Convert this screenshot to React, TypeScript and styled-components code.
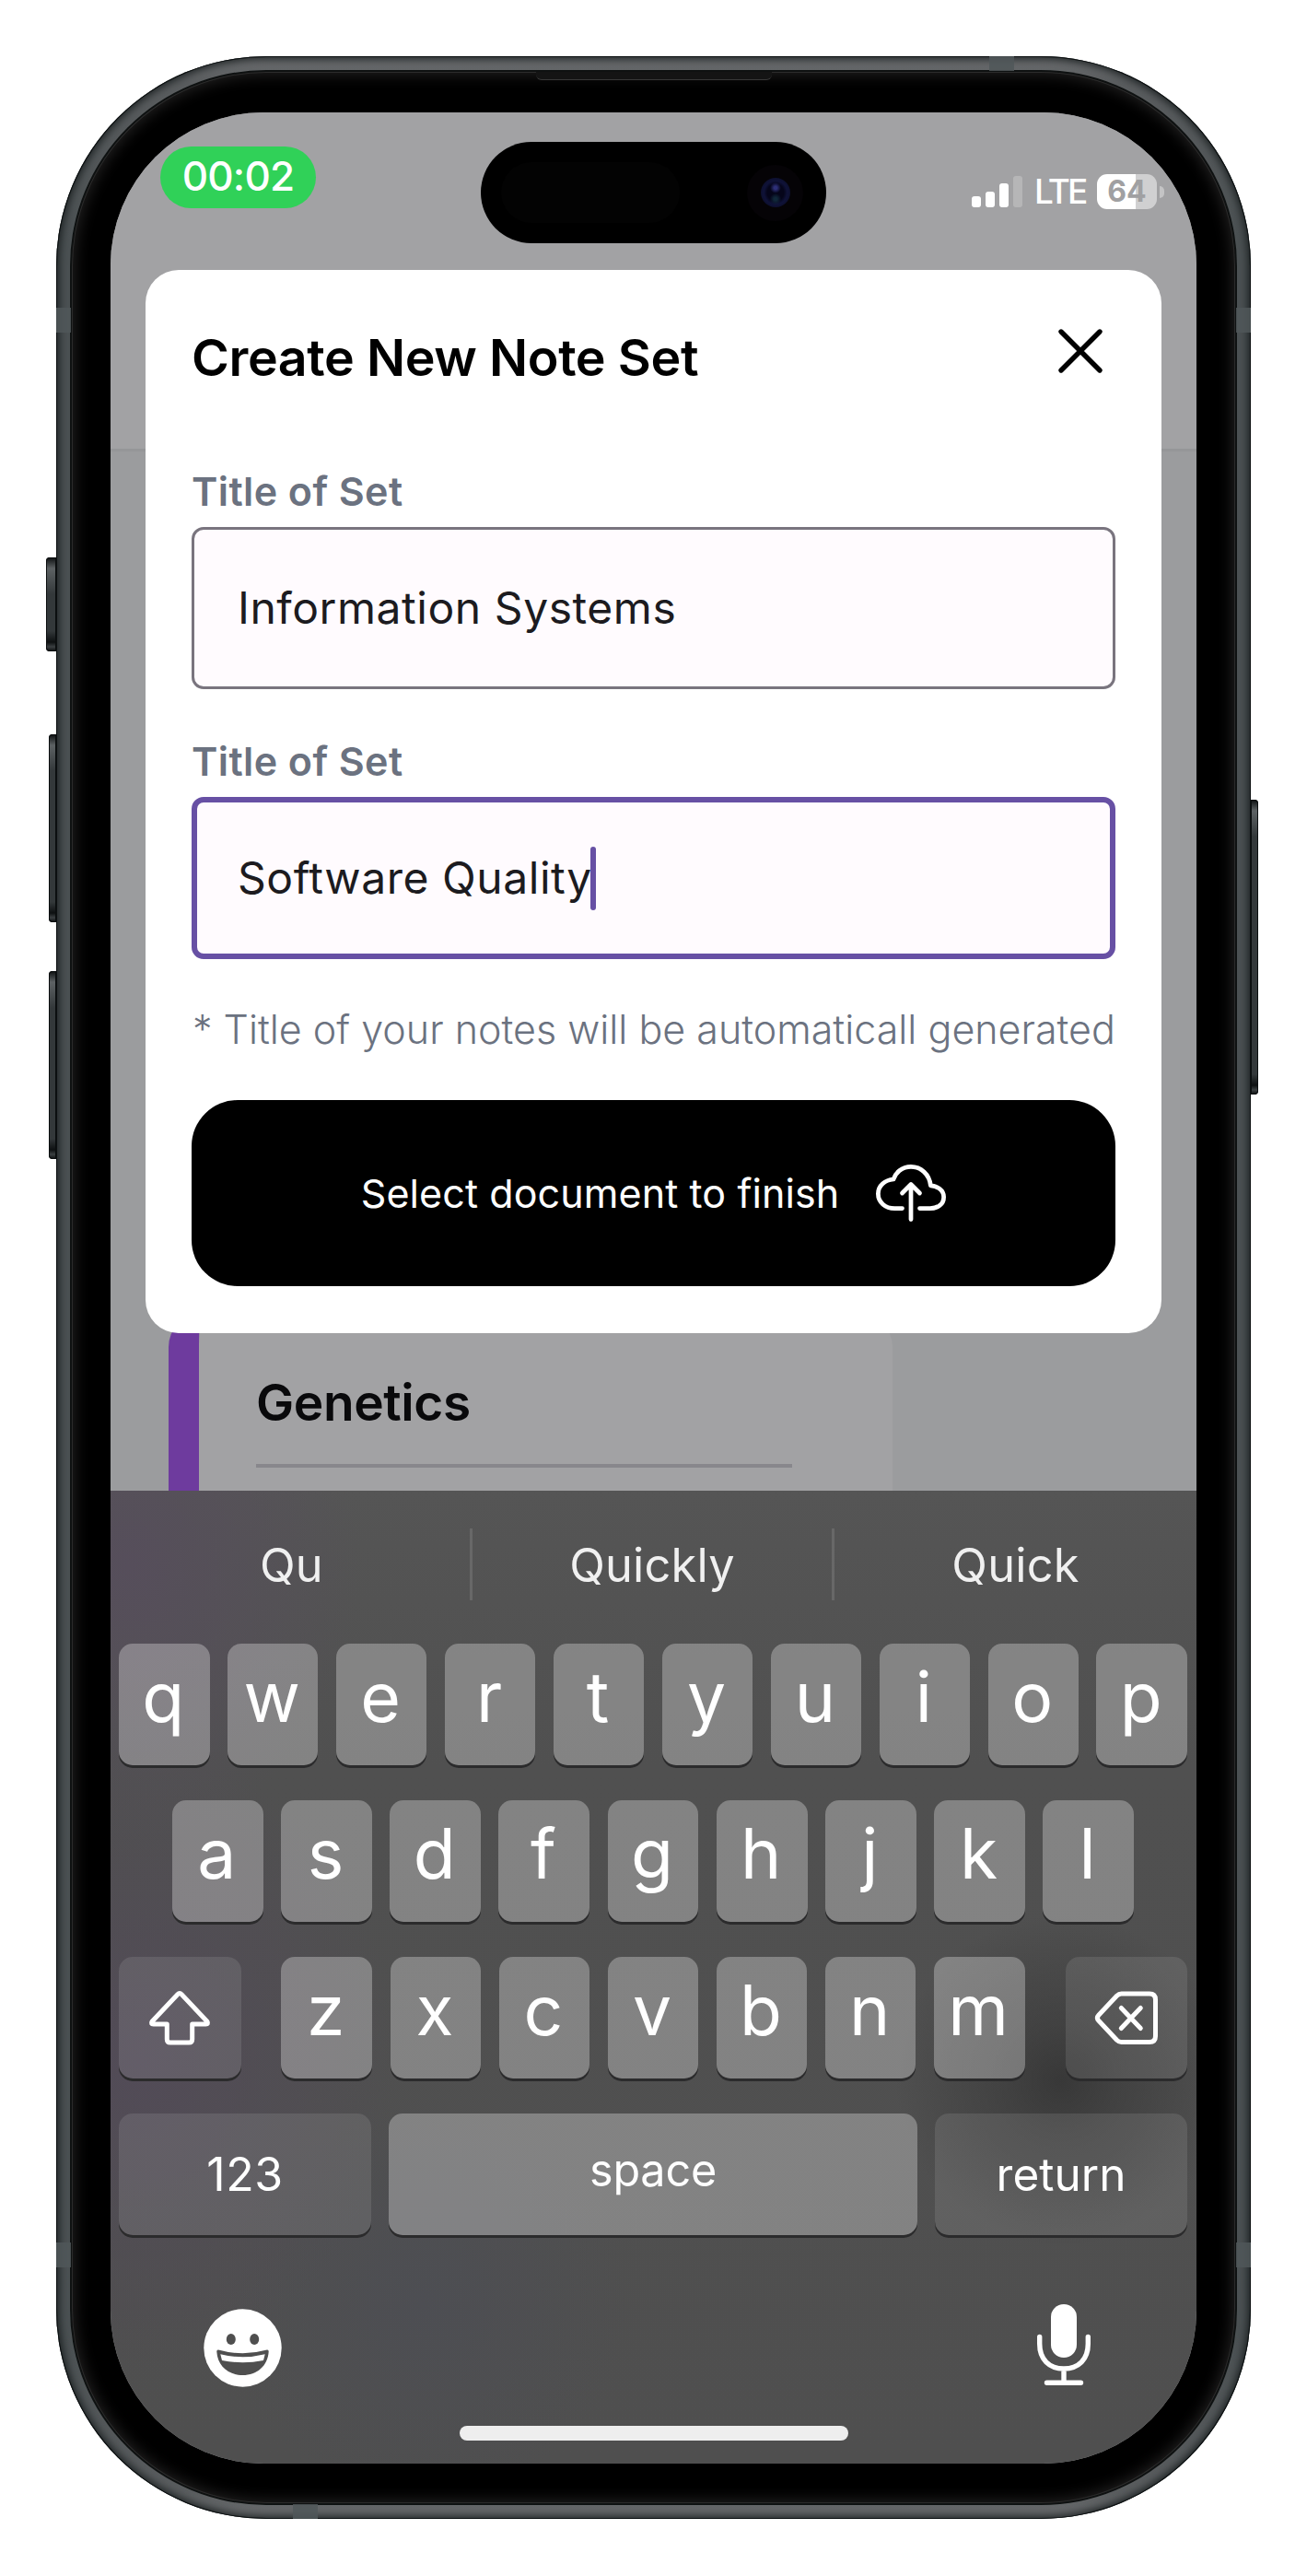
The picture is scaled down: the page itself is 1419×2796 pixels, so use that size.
import React from "react";
import styled, { createGlobalStyle, css } from "styled-components";

const GlobalStyle = createGlobalStyle`
  * { box-sizing: border-box; }
  html, body { margin: 0; padding: 0; background: #fff; }
  body { font-family: Inter, "Liberation Sans", sans-serif; }
  button { font-family: inherit; border: 0; padding: 0; margin: 0; background: none; }
  svg { display: block; flex: none; }
`;

/* ---------- Device frame ---------- */

const Page = styled.main`
  width: 1419px;
  height: 2796px;
  padding: 61px;
  overflow: hidden;
  background: #fff;
`;

const Device = styled.div`
  position: relative;
  width: 1297px;
  height: 2673px;
  padding: 17px;
  border-radius: 228px;
  background: linear-gradient(180deg, #6c6e70 0, #5a5d5f 30px, #4b5153 200px, #4b5153 2473px, #5a5d5f 2643px, #6c6e70 100%);
  box-shadow: inset 0 0 0 1px #0c1011, inset 0 0 10px 3px #1a1f20;
`;

const Bezel = styled.div`
  width: 100%;
  height: 100%;
  padding: 44px 42px 43px 42px;
  border-radius: 211px;
  background: #000;
  box-shadow: 0 0 0 2px #0e1111, inset 0 0 0 1px #2b2b2b, inset 0 0 16px 3px #232222;
`;

const SideButton = styled.div<{ $side: "left" | "right"; $top: number; $height: number; $depth: number }>`
  position: absolute;
  top: ${(p) => p.$top}px;
  ${(p) => p.$side}: ${(p) => -p.$depth}px;
  width: ${(p) => p.$depth}px;
  height: ${(p) => p.$height}px;
  border-radius: ${(p) => (p.$side === "left" ? "4px 0 0 4px" : "0 4px 4px 0")};
  background: linear-gradient(180deg, #0b0e0f 0, #5d6264 12px, #33383a 40px, #33383a calc(100% - 22px), #0d1011 calc(100% - 10px), #3b4042 calc(100% - 5px), #090b0c 100%);
  box-shadow: inset 0 0 0 1px #0a0d0e;
`;

const Antenna = styled.div<{ $edge: "top" | "bottom" | "left" | "right"; $offset: number }>`
  position: absolute;
  background: rgba(80, 87, 89, 0.85);
  ${(p) =>
    p.$edge === "top" || p.$edge === "bottom"
      ? css`
          ${p.$edge}: 0;
          left: ${p.$offset}px;
          width: 27px;
          height: 16px;
        `
      : css`
          ${p.$edge}: 0;
          top: ${p.$offset}px;
          width: 16px;
          height: 27px;
        `}
`;

const Earpiece = styled.div`
  position: absolute;
  top: 17px;
  left: 521px;
  width: 256px;
  height: 9px;
  background: #141414;
  border-bottom: 1px solid #383838;
  border-radius: 0 0 6px 6px;
`;

const Screen = styled.div`
  display: grid;
  width: 1179px;
  height: 2552px;
  border-radius: 166px;
  overflow: hidden;
  background: #9b9c9e;

  > * {
    grid-area: 1 / 1;
    min-width: 0;
    min-height: 0;
  }
`;

/* ---------- Dimmed app behind the dialog ---------- */

const Backdrop = styled.div`
  display: flex;
  flex-direction: column;
`;

const BackdropHeader = styled.div`
  height: 368px;
  background: #a2a2a4;
  border-bottom: 3px solid #959698;
`;

const NoteCard = styled.article`
  width: 786px;
  height: 360px;
  margin: 936px 0 0 63px;
  padding: 63px 109px 0 62px;
  border-left: 33px solid #6e3b9e;
  border-radius: 36px;
  background: #a2a2a4;
`;

const CardTitle = styled.h3`
  margin: 0;
  height: 104px;
  border-bottom: 4px solid #88878c;
  font-size: 55px;
  line-height: 66px;
  font-weight: 600;
  letter-spacing: -0.4px;
  color: #09090b;
  white-space: nowrap;
`;

/* ---------- Foreground ---------- */

const Foreground = styled.div`
  display: flex;
  flex-direction: column;
`;

const StatusBar = styled.header`
  display: grid;
  grid-template-columns: 348px 375px 1fr;
  align-items: start;
  height: 171px;
  padding: 32px 35px 0 54px;
`;

const CallPill = styled.span`
  width: 169px;
  height: 67px;
  margin-top: 5px;
  border-radius: 34px;
  background: #30d158;
  color: #fff;
  font-size: 44px;
  line-height: 65px;
  font-weight: 500;
  letter-spacing: -0.8px;
  text-align: center;
`;

const Island = styled.div`
  display: flex;
  align-items: center;
  justify-content: space-between;
  height: 110px;
  padding: 0 25px 0 22px;
  border-radius: 55px;
  background: #000;
`;

const IslandSensor = styled.span`
  width: 194px;
  height: 66px;
  border-radius: 33px;
  background: #030303;
`;

const Lens = styled.span`
  display: grid;
  place-items: center;
  width: 61px;
  height: 61px;
  border-radius: 50%;
  background: #050306;

  &::after {
    content: "";
    width: 32px;
    height: 32px;
    border-radius: 50%;
    background: radial-gradient(circle at 50% 34%, #2d2f78 0 6%, transparent 22%),
      radial-gradient(circle at 50% 72%, #10283a 0 6%, transparent 22%),
      radial-gradient(circle, #05051a 0 40%, #0f1238 56%, #0a0b1c 100%);
  }
`;

const StatusIcons = styled.div`
  display: flex;
  align-items: center;
  justify-content: flex-end;
  height: 108px;
`;

const Signal = styled.span`
  display: flex;
  align-items: flex-end;
  gap: 5px;
  height: 34px;
  margin-right: 13px;
`;

const SignalBar = styled.i<{ $h: number; $off?: boolean }>`
  width: 10px;
  height: ${(p) => p.$h}px;
  border-radius: 3px;
  background: ${(p) => (p.$off ? "#b6b6b7" : "#fff")};
`;

const Network = styled.span`
  width: 55px;
  margin-right: 13px;
  color: #fff;
  font-size: 37px;
  line-height: 40px;
  font-weight: 500;
  letter-spacing: -2.8px;
  white-space: nowrap;
`;

const Battery = styled.span`
  width: 65px;
  height: 38px;
  border-radius: 11px;
  background: linear-gradient(90deg, #fff 64%, #d0d0d1 64%);
  color: #a0a0a2;
  font-size: 32px;
  line-height: 38px;
  font-weight: 700;
  text-align: center;
`;

const BatteryTip = styled.span`
  width: 5px;
  height: 13px;
  margin-left: 3px;
  border-radius: 0 5px 5px 0;
  background: #c4c4c5;
`;

/* ---------- Dialog ---------- */

const Dialog = styled.section`
  display: flex;
  flex-direction: column;
  height: 1154px;
  margin: 0 38px;
  padding: 50px 50px 51px;
  border-radius: 36px;
  background: #fff;
`;

const DialogHeader = styled.div`
  display: flex;
  align-items: flex-start;
  justify-content: space-between;
  height: 90px;
  margin-bottom: 75px;
  padding: 0 11px 0 0;
`;

const DialogTitle = styled.h2`
  margin: 0;
  font-size: 55.5px;
  line-height: 90px;
  font-weight: 600;
  letter-spacing: -0.4px;
  color: #000;
  white-space: nowrap;
`;

const CloseButton = styled.button`
  margin-top: 11px;
`;

const Field = styled.label`
  display: block;
  margin-bottom: 53px;

  & + & {
    margin-bottom: 46px;
  }
`;

const FieldLabel = styled.span`
  display: block;
  margin: 0 0 14px 0;
  font-size: 43px;
  line-height: 50px;
  font-weight: 600;
  letter-spacing: 0.4px;
  color: #6b7280;
`;

const FieldBox = styled.span<{ $focused?: boolean }>`
  display: flex;
  align-items: center;
  height: 176px;
  padding-left: ${(p) => (p.$focused ? 44 : 47)}px;
  border: ${(p) => (p.$focused ? "6px solid #6750a4" : "3px solid #79747e")};
  border-radius: 13px;
  background: #fffbfe;
  font-size: 48px;
  line-height: 60px;
  letter-spacing: 0.55px;
  color: #1c1b1f;
  white-space: nowrap;
`;

const Caret = styled.i`
  width: 6px;
  height: 69px;
  margin-left: -2px;
  border-radius: 3px;
  background: #6750a4;
`;

const Hint = styled.p`
  margin: 0 0 47px 1px;
  font-size: 43px;
  line-height: 60px;
  font-weight: 300;
  color: #6b7280;
  white-space: nowrap;
`;

const SubmitButton = styled.button`
  display: flex;
  align-items: center;
  justify-content: center;
  gap: 40px;
  height: 202px;
  border-radius: 50px;
  background: #000;
  color: #fff;
  font-size: 43px;
  line-height: 50px;
  letter-spacing: 0.1px;
  white-space: nowrap;
`;

/* ---------- Keyboard ---------- */

const Keyboard = styled.section`
  display: flex;
  flex-direction: column;
  height: 1056px;
  margin-top: auto;
  background: radial-gradient(circle at 1032px 640px, rgba(48, 48, 48, 0.75) 0, rgba(48, 48, 48, 0.45) 60px, rgba(60, 60, 60, 0) 180px),
    radial-gradient(ellipse 250px 300px at 20px 80px, #564e5b 0, rgba(84, 78, 90, 0) 100%),
    radial-gradient(ellipse 280px 340px at 30px 620px, #524b57 0, rgba(80, 75, 88, 0) 100%),
    radial-gradient(ellipse 220px 220px at 340px 880px, #4d4e53 0, rgba(78, 79, 84, 0) 100%),
    linear-gradient(180deg, #555555 0, #505050 300px, #4f4f4f 100%);
`;

const Suggestions = styled.div`
  display: grid;
  grid-template-columns: 390px 393px 1fr;
  align-items: center;
  height: 160px;
  margin-bottom: 6px;
`;

const Suggestion = styled.span`
  height: 78px;
  border-left: 3px solid #686868;
  color: #f0f0f0;
  font-size: 50.5px;
  line-height: 79px;
  letter-spacing: 0.2px;
  text-align: center;

  &:first-child {
    border-color: transparent;
  }
`;

const Rows = styled.div`
  display: flex;
  flex-direction: column;
  gap: 38px;
`;

const KeyRow = styled.div<{ $inset?: number }>`
  display: flex;
  gap: 19.4px;
  height: 132px;
  padding: 0 ${(p) => (p.$inset ?? 9) + 1}px 0 ${(p) => p.$inset ?? 9}px;
`;

const Key = styled.button<{ $dark?: boolean; $width?: number; $pushLeft?: boolean; $pushRight?: boolean }>`
  display: flex;
  align-items: center;
  justify-content: center;
  flex: ${(p) => (p.$width ? `0 0 ${p.$width}px` : "1 1 0")};
  min-width: 0;
  margin-left: ${(p) => (p.$pushLeft ? 24.6 : 0)}px;
  margin-right: ${(p) => (p.$pushRight ? 24.6 : 0)}px;
  border-radius: 15px;
  background: ${(p) => (p.$dark ? "rgba(255, 255, 255, 0.1)" : "rgba(255, 255, 255, 0.295)")};
  box-shadow: 0 3px 0 #2b2b2c;
  color: #fff;
`;

const Letter = styled.span`
  margin-left: -2px;
  padding-bottom: 16px;
  font-size: 75px;
  line-height: 90px;
  font-weight: 400;
`;

const KeyLabel = styled.span<{ $lift?: number; $size?: number; $track?: number }>`
  padding-bottom: ${(p) => p.$lift ?? 0}px;
  font-size: ${(p) => p.$size ?? 49}px;
  line-height: 60px;
  letter-spacing: ${(p) => p.$track ?? 0}px;
`;

const Tools = styled.div`
  display: flex;
  align-items: flex-start;
  justify-content: space-between;
  height: 207px;
  padding: 75px 114px 0 101px;
`;

const EmojiButton = styled.button`
  margin-top: 5px;
`;

const HomeIndicator = styled.div`
  width: 422px;
  height: 16px;
  margin: 0 auto;
  border-radius: 8px;
  background: #eee;
`;

/* ---------- Icons ---------- */

const CloseIcon = () => (
  <svg width="54" height="54" viewBox="0 0 54 54" fill="none" stroke="#000" strokeWidth="5.4" strokeLinecap="round">
    <path d="M6 6 48 48M48 6 6 48" />
  </svg>
);

const CloudUploadIcon = () => (
  <svg width="76" height="76" viewBox="0 0 512 512" fill="none" stroke="#fff" strokeWidth="32" strokeLinecap="round" strokeLinejoin="round">
    <path d="M320 367.79h76c55 0 100-29.21 100-83.6s-53-81.47-96-83.6c-8.89-85.06-71-136.8-144-136.8-69 0-113.44 45.79-128 91.2-60 5.7-112 43.88-112 106.4s54 106.4 120 106.4h56" />
    <path d="M320 255.79l-64-64-64 64M256 448.21V207.79" />
  </svg>
);

const ShiftIcon = () => (
  <svg width="68" height="60" viewBox="0 0 68 60" fill="none" stroke="#fff" strokeWidth="5" strokeLinejoin="round">
    <path d="M31.8 4.7Q34 2.4 36.2 4.7L64 34.2Q65.6 37 62.5 37H47.7V53.5Q47.7 57 44.2 57H23.8Q20.3 57 20.3 53.5V37H5.5Q2.4 37 4 34.2Z" />
  </svg>
);

const BackspaceIcon = () => (
  <svg width="70" height="60" viewBox="0 0 70 60" fill="none" stroke="#fff" strokeWidth="5" strokeLinecap="round" strokeLinejoin="round">
    <path d="M29.5 4H60Q66.5 4 66.5 10.5V50Q66.5 56.5 60 56.5H29.5Q26.8 56.5 24.5 54.2L4.8 33.2Q2 30.2 4.8 27.2L24.5 6.3Q26.8 4 29.5 4Z" />
    <path d="M29.3 19.5 50.3 41.5M50.3 19.5 29.3 41.5" />
  </svg>
);

const EmojiIcon = () => (
  <svg width="85" height="85" viewBox="0 0 85 85">
    <circle cx="42.5" cy="42.5" r="42.2" fill="#fff" />
    <ellipse cx="29.8" cy="33" rx="5" ry="6" fill="#4f4f4f" />
    <ellipse cx="55.2" cy="33" rx="5" ry="6" fill="#4f4f4f" />
    <path d="M16 44.6Q42.5 52 69 44.6Q70.8 44.4 70.7 46.5C69.7 62 58 72 42.5 72S15.3 62 14.3 46.5Q14.2 44.4 16 44.6Z" fill="#4f4f4f" />
    <path d="M18.3 49.2Q42.5 55.2 66.7 49.2L65 56Q42.5 60.5 20 56Z" fill="#fff" />
  </svg>
);

const MicIcon = () => (
  <svg width="60" height="90" viewBox="0 0 60 90" fill="none" stroke="#fff" strokeWidth="5.4" strokeLinecap="round">
    <rect x="16" y="0" width="28" height="58" rx="14" fill="#fff" stroke="none" />
    <path d="M3.7 35.5V43C3.7 60 14 70 30 70S56.3 60 56.3 43V35.5M30 70V84M11.5 85.3H48.5" />
  </svg>
);

/* ---------- App ---------- */

const letters = (row: string) => row.split("").map((c) => (
  <Key key={c}>
    <Letter>{c}</Letter>
  </Key>
));

export default function App() {
  return (
    <Page>
      <GlobalStyle />
      <Device>
        <SideButton $side="left" $top={544} $height={102} $depth={11} />
        <SideButton $side="left" $top={736} $height={204} $depth={8} />
        <SideButton $side="left" $top={993} $height={204} $depth={8} />
        <SideButton $side="right" $top={807} $height={320} $depth={8} />
        <Antenna $edge="top" $offset={1013} />
        <Antenna $edge="bottom" $offset={257} />
        <Antenna $edge="left" $offset={273} />
        <Antenna $edge="right" $offset={273} />
        <Antenna $edge="left" $offset={2373} />
        <Antenna $edge="right" $offset={2373} />
        <Bezel>
          <Screen>
            <Backdrop>
              <BackdropHeader />
              <NoteCard>
                <CardTitle>Genetics</CardTitle>
              </NoteCard>
            </Backdrop>

            <Foreground>
              <StatusBar>
                <CallPill>00:02</CallPill>
                <Island>
                  <IslandSensor />
                  <Lens />
                </Island>
                <StatusIcons>
                  <Signal>
                    <SignalBar $h={12} />
                    <SignalBar $h={17} />
                    <SignalBar $h={26} />
                    <SignalBar $h={34} $off />
                  </Signal>
                  <Network>LTE</Network>
                  <Battery>64</Battery>
                  <BatteryTip />
                </StatusIcons>
              </StatusBar>

              <Dialog>
                <DialogHeader>
                  <DialogTitle>Create New Note Set</DialogTitle>
                  <CloseButton aria-label="Close">
                    <CloseIcon />
                  </CloseButton>
                </DialogHeader>
                <Field>
                  <FieldLabel>Title of Set</FieldLabel>
                  <FieldBox>Information Systems</FieldBox>
                </Field>
                <Field>
                  <FieldLabel>Title of Set</FieldLabel>
                  <FieldBox $focused>
                    Software Quality
                    <Caret />
                  </FieldBox>
                </Field>
                <Hint>* Title of your notes will be automaticall generated</Hint>
                <SubmitButton>
                  Select document to finish
                  <CloudUploadIcon />
                </SubmitButton>
              </Dialog>

              <Keyboard>
                <Suggestions>
                  <Suggestion>Qu</Suggestion>
                  <Suggestion>Quickly</Suggestion>
                  <Suggestion>Quick</Suggestion>
                </Suggestions>
                <Rows>
                  <KeyRow>{letters("qwertyuiop")}</KeyRow>
                  <KeyRow $inset={67}>{letters("asdfghjkl")}</KeyRow>
                  <KeyRow>
                    <Key $dark $width={132.5} $pushRight aria-label="Shift">
                      <ShiftIcon />
                    </Key>
                    {letters("zxcvbnm")}
                    <Key $dark $width={132.5} $pushLeft aria-label="Delete">
                      <BackspaceIcon />
                    </Key>
                  </KeyRow>
                  <KeyRow>
                    <Key $dark $width={274}>
                      <KeyLabel $size={50} $track={0.6}>123</KeyLabel>
                    </Key>
                    <Key>
                      <KeyLabel $lift={8} $size={48.5} $track={-0.2}>space</KeyLabel>
                    </Key>
                    <Key $dark $width={274}>
                      <KeyLabel $size={49.5}>return</KeyLabel>
                    </Key>
                  </KeyRow>
                </Rows>
                <Tools>
                  <EmojiButton aria-label="Emoji">
                    <EmojiIcon />
                  </EmojiButton>
                  <button aria-label="Dictate">
                    <MicIcon />
                  </button>
                </Tools>
                <HomeIndicator />
              </Keyboard>
            </Foreground>
          </Screen>
        </Bezel>
        <Earpiece />
      </Device>
    </Page>
  );
}
